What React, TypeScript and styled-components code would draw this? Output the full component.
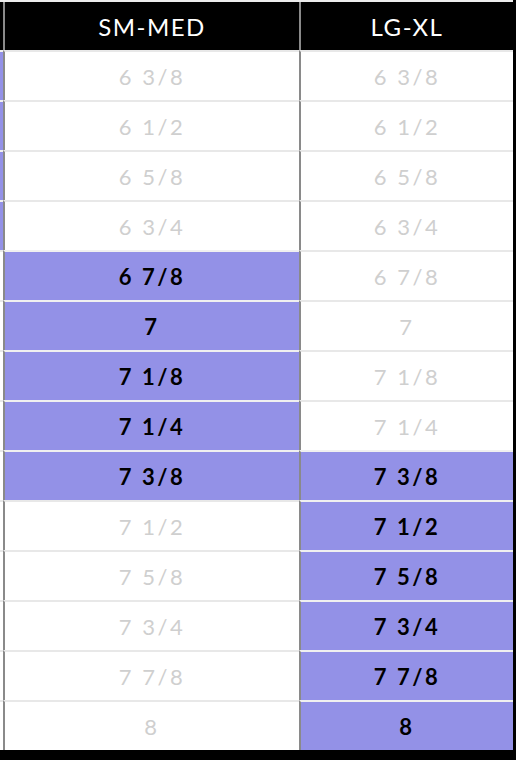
import React from "react";
import styled, { createGlobalStyle } from "styled-components";

const sizes = [
  "6 3/8",
  "6 1/2",
  "6 5/8",
  "6 3/4",
  "6 7/8",
  "7",
  "7 1/8",
  "7 1/4",
  "7 3/8",
  "7 1/2",
  "7 5/8",
  "7 3/4",
  "7 7/8",
  "8"
];

// which sizes each column covers (by index into sizes)
const prevRange = [0, 3];
const smMedRange = [4, 8];
const lgXlRange = [8, 13];

const inRange = (i: number, [a, b]: number[]) => i >= a && i <= b;

const GlobalStyle = createGlobalStyle`
  html, body {
    margin: 0;
    padding: 0;
    background: #000;
  }
  body {
    font-family: "Lato", "Open Sans", sans-serif;
  }
`;

const Table = styled.div`
  width: 513px;
  border-top: 2px solid #ececec;
  display: grid;
  grid-template-columns: 3px 296px 214px;
  grid-template-rows: 48px;
  grid-auto-rows: 50px;
`;

const HeadCell = styled.div<{ $divider?: boolean }>`
  background: #000;
  color: #fff;
  display: flex;
  align-items: center;
  justify-content: center;
  font-size: 24px;
  letter-spacing: 1.5px;
  border-left: ${(p) => (p.$divider ? "2px solid #8a8a8a" : "none")};
`;

const Cell = styled.div<{ $on: boolean; $divider?: boolean }>`
  border-top: 2px solid ${(p) => (p.$on ? "#f0f0f0" : "#e8e8e8")};
  border-left: ${(p) => (p.$divider ? "2px solid #8a8a8a" : "none")};
  background: ${(p) => (p.$on ? "#9391e7" : "#fff")};
  color: ${(p) => (p.$on ? "#000" : "#cfcfcf")};
  font-weight: ${(p) => (p.$on ? 700 : 400)};
  font-size: 22px;
  letter-spacing: 2.5px;
  display: flex;
  align-items: center;
  justify-content: center;
  white-space: pre;
`;

export default function App() {
  return (
    <>
      <GlobalStyle />
      <Table>
        <HeadCell />
        <HeadCell $divider>SM-MED</HeadCell>
        <HeadCell $divider>LG-XL</HeadCell>
        {sizes.map((s, i) => (
          <React.Fragment key={s}>
            <Cell $on={inRange(i, prevRange)} />
            <Cell $on={inRange(i, smMedRange)} $divider>
              {s}
            </Cell>
            <Cell $on={inRange(i, lgXlRange)} $divider>
              {s}
            </Cell>
          </React.Fragment>
        ))}
      </Table>
    </>
  );
}
